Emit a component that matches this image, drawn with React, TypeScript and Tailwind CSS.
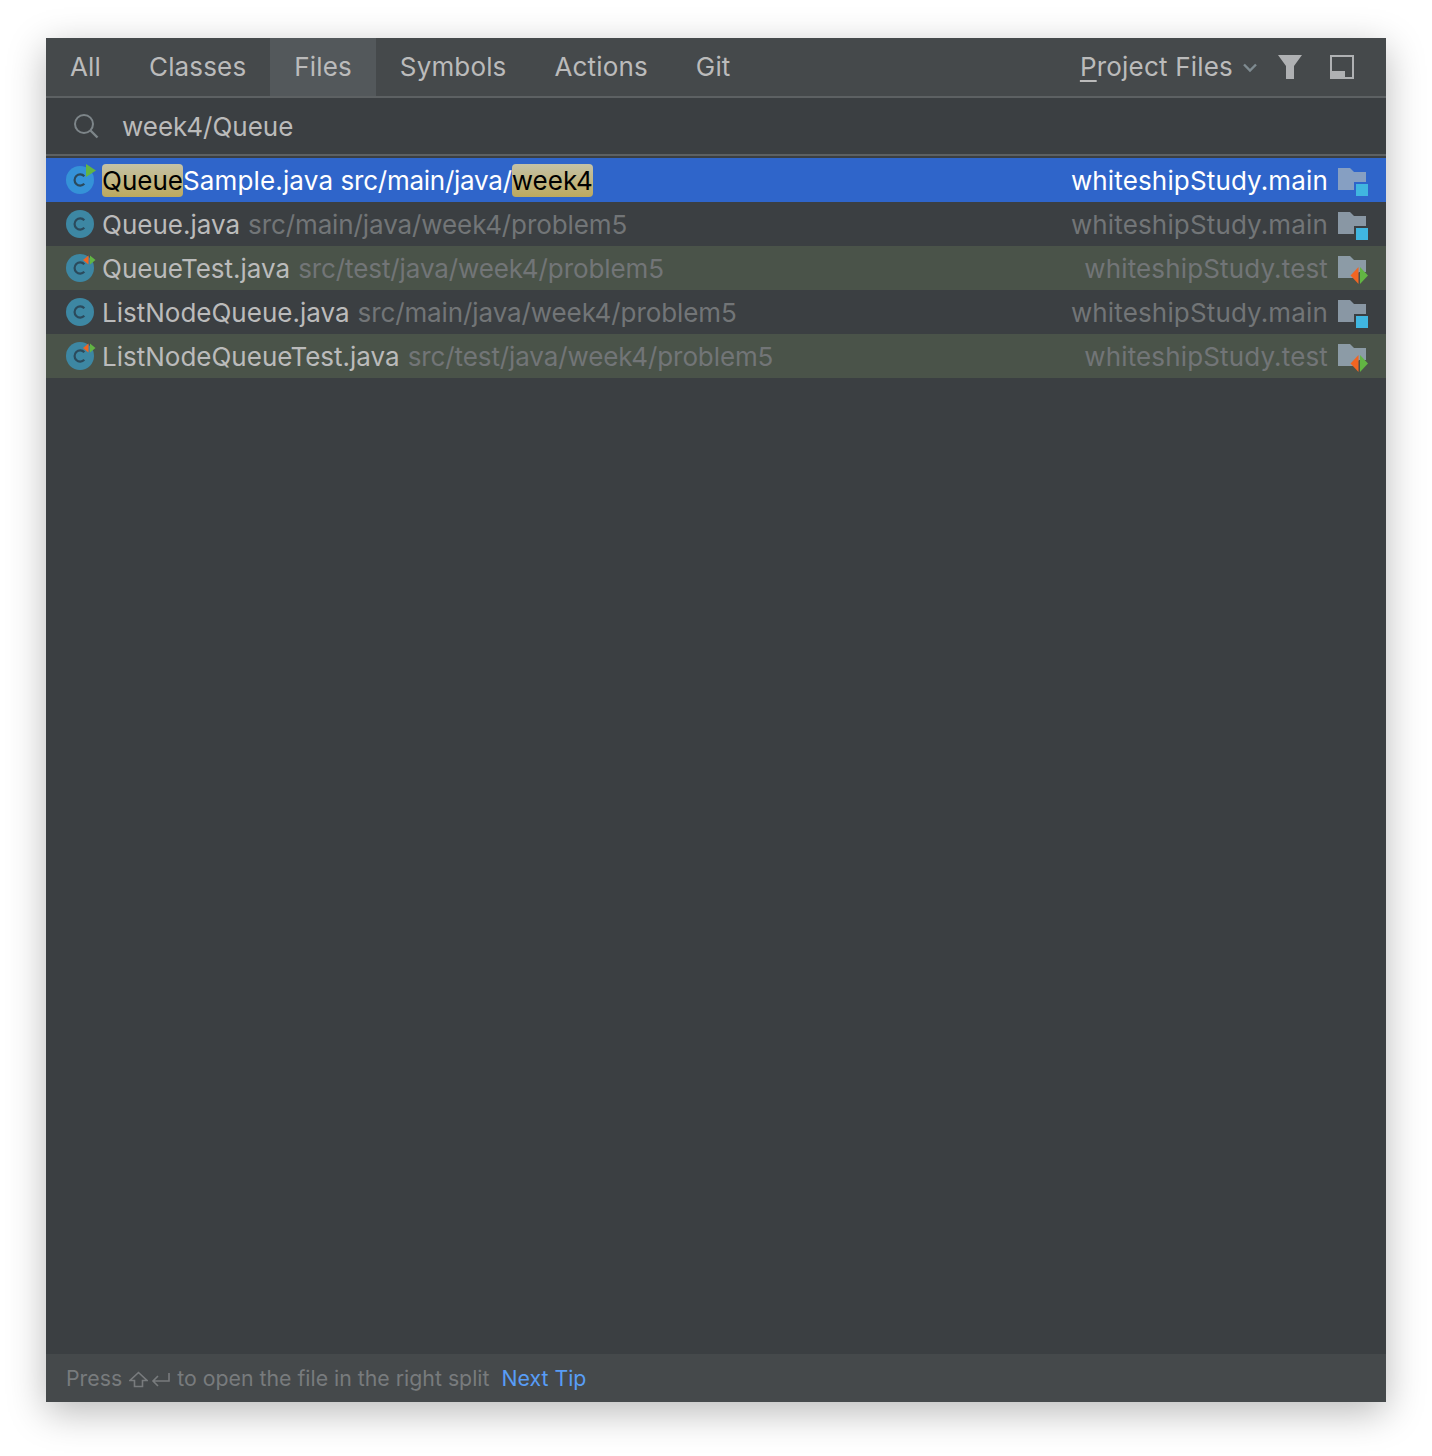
import React from "react";

function ClassIcon({ badge }: { badge: "run" | "test" | "none" }) {
  return (
    <svg width="30" height="30" viewBox="0 0 30 30" className="shrink-0 overflow-visible">
      <circle cx="14" cy="15" r="14" fill={badge === "run" ? "#3592d8" : "#3d87a3"} />
      <path d="M18.300 11.200a5.600 5.600 0 1 0 0 7.600" fill="none" stroke="#2b4a5c" strokeWidth="2.200" />
      {badge === "run" && <path d="M20 -1l10 6.500-10 6.500z" fill="#62b543" />}
      {badge === "test" && (
        <g>
          <path d="M22.500 2.500l-5.500 4.500 5.500 4.500z" fill="#f26522" />
          <path d="M24 2.500l5.500 4.500-5.500 4.500z" fill="#62b543" />
        </g>
      )}
    </svg>
  );
}

function ModuleIcon({ kind }: { kind: "main" | "test" }) {
  return (
    <svg width="32" height="32" viewBox="0 0 32 32" className="shrink-0">
      {kind === "main" ? (
        <g>
          <path d="M0 4h12l4 4h12v10H16v8H0z" fill="#9fb0c0" fillOpacity="0.78" />
          <rect x="18" y="20" width="12" height="12" fill="#40b6e0" />
        </g>
      ) : (
        <g>
          <path d="M0 4h12l4 4h12v12h-7l-6 6H0z" fill="#9fb0c0" fillOpacity="0.78" />
          <path d="M20.500 15v17l-8-8.500z" fill="#f26522" />
          <path d="M22 15v17l8-8.500z" fill="#62b543" />
        </g>
      )}
    </svg>
  );
}

const rows = [
  { name: "Queue.java", path: "src/main/java/week4/problem5", mod: "whiteshipStudy.main", kind: "main" as const, badge: "none" as const, bg: "" },
  { name: "QueueTest.java", path: "src/test/java/week4/problem5", mod: "whiteshipStudy.test", kind: "test" as const, badge: "test" as const, bg: "bg-[#4a5349]" },
  { name: "ListNodeQueue.java", path: "src/main/java/week4/problem5", mod: "whiteshipStudy.main", kind: "main" as const, badge: "none" as const, bg: "" },
  { name: "ListNodeQueueTest.java", path: "src/test/java/week4/problem5", mod: "whiteshipStudy.test", kind: "test" as const, badge: "test" as const, bg: "bg-[#4a5349]" },
];

const tabs = ["All", "Classes", "Files", "Symbols", "Actions", "Git"];

export default function App() {
  return (
    <div className="w-[1432px] h-[1456px] bg-white pt-[38px] px-[46px] font-['Inter','Liberation_Sans',sans-serif] text-[26px] leading-none">
      <div className="h-[1364px] flex flex-col bg-[#3b3f42] shadow-[0_10px_36px_rgba(0,0,0,0.28)] text-[#bbbbbb]">
        <div className="h-[60px] shrink-0 flex items-center bg-[#45494b] border-b-2 border-[#5d6163] pr-[32px]">
          {tabs.map((t) => (
            <div key={t} className={`h-[58px] flex items-center px-6 tracking-[0.15px] ${t === "Files" ? "bg-[#53585b]" : ""}`}>{t}</div>
          ))}
          <div className="ml-auto flex items-center">
            <span className="tracking-[0.2px]"><span className="underline underline-offset-4">P</span>roject Files</span>
            <svg width="14" height="10" viewBox="0 0 14 10" className="ml-[10px] mt-[2px]"><path d="M1 1.500l6 6 6-6" fill="none" stroke="#7f8b91" strokeWidth="2.400" /></svg>
            <svg width="24" height="24" viewBox="0 0 24 24" className="ml-[21px]"><path d="M0 0h24L16 11v13H8V11z" fill="#afb1b3" /></svg>
            <svg width="24" height="24" viewBox="0 0 24 24" className="ml-[28px]"><path d="M1 1h22v22H1z" fill="none" stroke="#afb1b3" strokeWidth="2" /><path d="M1 16h14v7H1z" fill="#afb1b3" /></svg>
          </div>
        </div>
        <div className="h-[58px] shrink-0 flex items-center pl-[26px] border-b-2 border-[#5d6163]">
          <svg width="28" height="28" viewBox="0 0 28 28"><circle cx="12" cy="12" r="9" fill="none" stroke="#7d8589" strokeWidth="2" /><path d="M18.500 18.500l7 7" stroke="#7d8589" strokeWidth="2.400" /></svg>
          <span className="ml-[22px] pt-[2px]">week4/Queue</span>
        </div>
        <div className="h-[44px] mt-[2px] shrink-0 flex items-center bg-[#2f65ca] text-white pl-5 pr-4">
          <ClassIcon badge="run" />
          <span className="ml-[6px] pt-[2px] whitespace-pre"><span className="bg-linear-to-b from-[#c5c2a6] to-[#bda95c] text-black rounded-[4px] py-[1px]">Queue</span><span className="tracking-[0.15px]">Sample.java </span><span className="tracking-[-0.25px]">src/main/java/</span><span className="bg-linear-to-b from-[#c5c2a6] to-[#bda95c] text-black rounded-[4px] py-[1px]">week4</span></span>
          <span className="ml-auto mr-[10px] pt-[2px] tracking-[0.15px]">whiteshipStudy.main</span>
          <ModuleIcon kind="main" />
        </div>
        {rows.map((r) => (
          <div key={r.name} className={`h-[44px] shrink-0 flex items-center pl-5 pr-4 ${r.bg}`}>
            <ClassIcon badge={r.badge} />
            <span className="ml-[6px] pt-[2px]">{r.name}</span>
            <span className="ml-2 pt-[2px] tracking-[-0.1px] text-[#727577]">{r.path}</span>
            <span className="ml-auto mr-[10px] pt-[2px] tracking-[0.15px] text-[#727577]">{r.mod}</span>
            <ModuleIcon kind={r.kind} />
          </div>
        ))}
        <div className="flex-1" />
        <div className="h-[48px] shrink-0 flex items-center bg-[#45494b] pl-5 pt-[2px] text-[21.3px] text-[#787b7d]">
          <span>Press</span>
          <svg width="19" height="17" viewBox="0 0 19 17" className="ml-[7px]"><path d="M9.500 1.500L18 9.500h-4.500v6h-8v-6H1z" fill="none" stroke="#787b7d" strokeWidth="1.600" /></svg>
          <svg width="19" height="17" viewBox="0 0 19 17" className="ml-[3px]"><path d="M18 2v8H2M7 5l-5 5 5 5" fill="none" stroke="#787b7d" strokeWidth="1.600" /></svg>
          <span className="ml-[7px]">to open the file in the right split</span>
          <span className="ml-[12px] text-[#589df6]">Next Tip</span>
        </div>
      </div>
    </div>
  );
}
